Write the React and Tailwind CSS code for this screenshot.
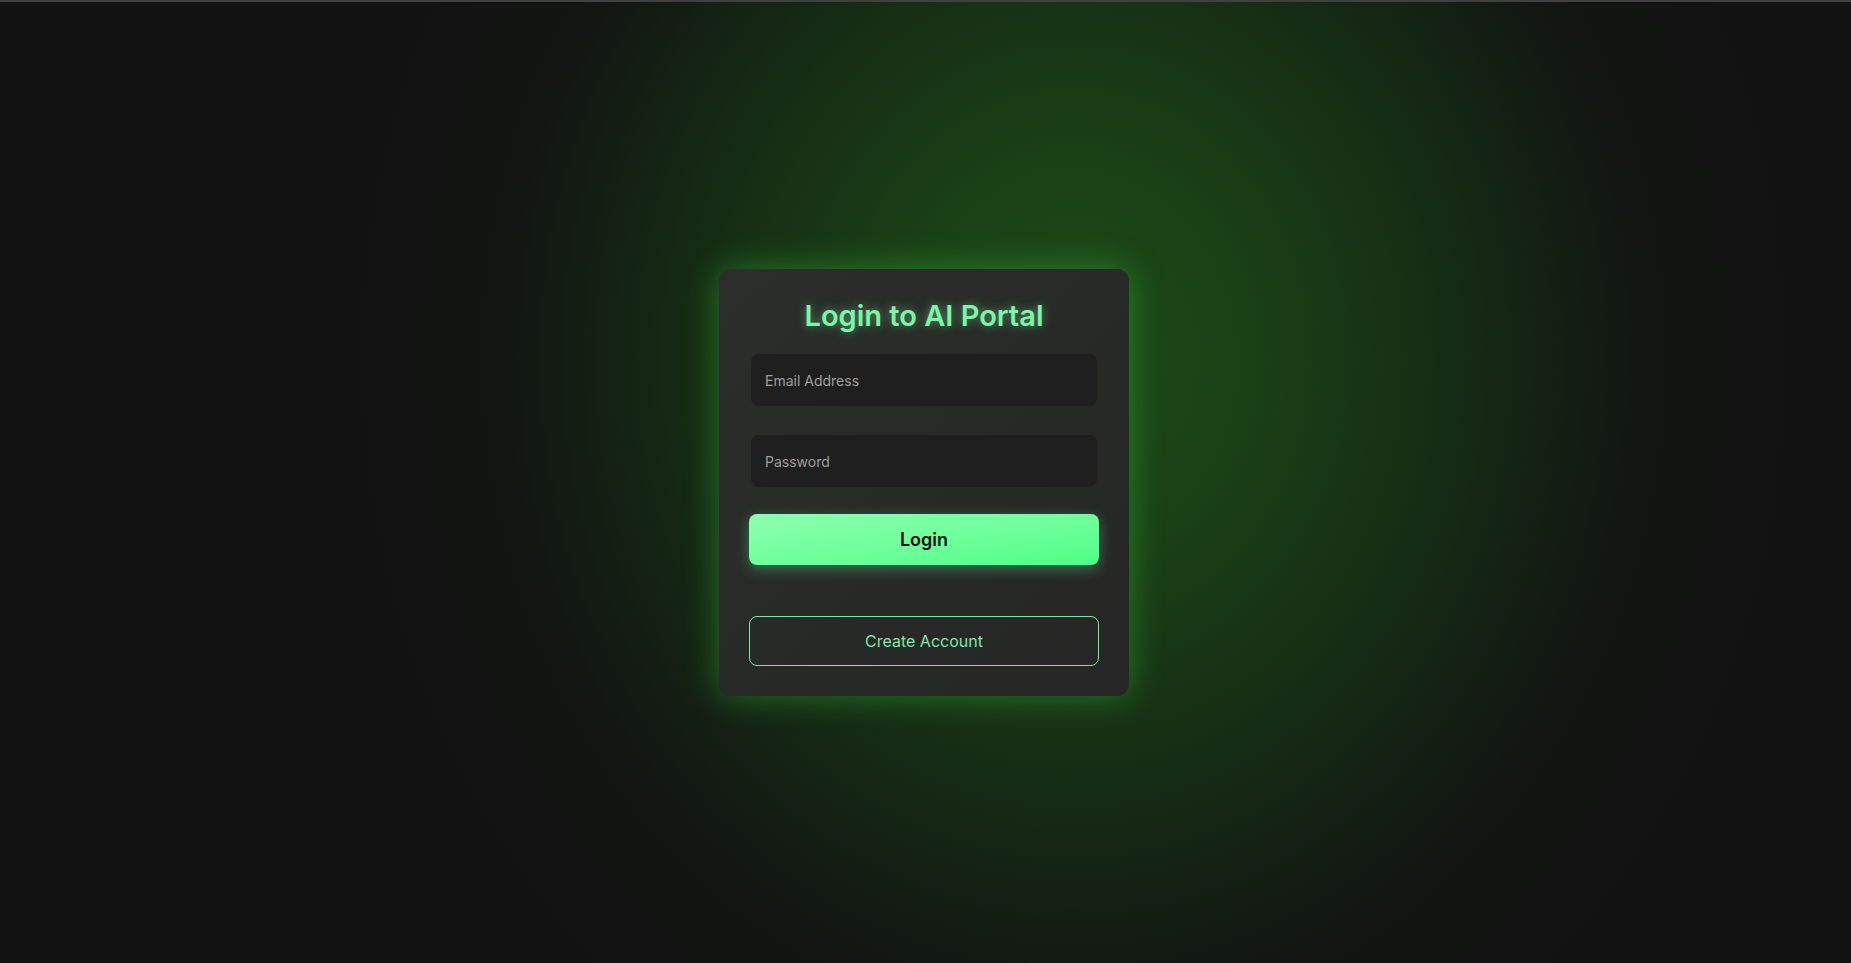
export default function App() {
  return (
    <div
      className="min-h-screen w-full border-t-2 border-[#404040] bg-[#121212] bg-[radial-gradient(ellipse_720px_820px_at_58%_37%,#1c4b18_0%,#1a4016_25%,#152a14_55%,#121512_80%,#121212_100%)] flex items-center justify-center"
      style={{ fontFamily: "Inter, 'Liberation Sans', sans-serif" }}
    >
      <div className="mr-[3px] w-[410px] rounded-xl bg-gradient-to-br from-[#2b2e2a] to-[#252625] px-[30px] pt-[27px] pb-[30px] shadow-[0_0_34px_rgba(60,220,60,0.42)]">
        <h1 className="text-center text-[29px] leading-[40px] font-semibold text-[#7df5a6] [text-shadow:0_0_10px_rgba(125,245,166,0.55)]">
          Login to AI Portal
        </h1>

        <div className="mt-[18px] flex flex-col items-center">
          <input
            type="email"
            placeholder="Email Address"
            className="w-[346px] h-[52px] rounded-lg bg-[#1f1f1f] px-[14px] text-[14px] text-white placeholder-[#9e9e9e] outline-none"
          />
          <input
            type="password"
            placeholder="Password"
            className="mt-[29px] w-[346px] h-[52px] rounded-lg bg-[#1f1f1f] px-[14px] text-[14px] text-white placeholder-[#9e9e9e] outline-none"
          />
        </div>

        <button className="mt-[27px] w-full h-[51px] rounded-lg bg-gradient-to-br from-[#8cffaf] to-[#4bff87] text-[18px] font-semibold text-[#111] shadow-[0_4px_14px_rgba(110,255,160,0.35)]">
          Login
        </button>

        <button className="mt-[51px] w-full h-[50px] rounded-lg border border-[#7be8a2] bg-transparent text-[16px] text-[#7de8a3]">
          Create Account
        </button>
      </div>
    </div>
  );
}
